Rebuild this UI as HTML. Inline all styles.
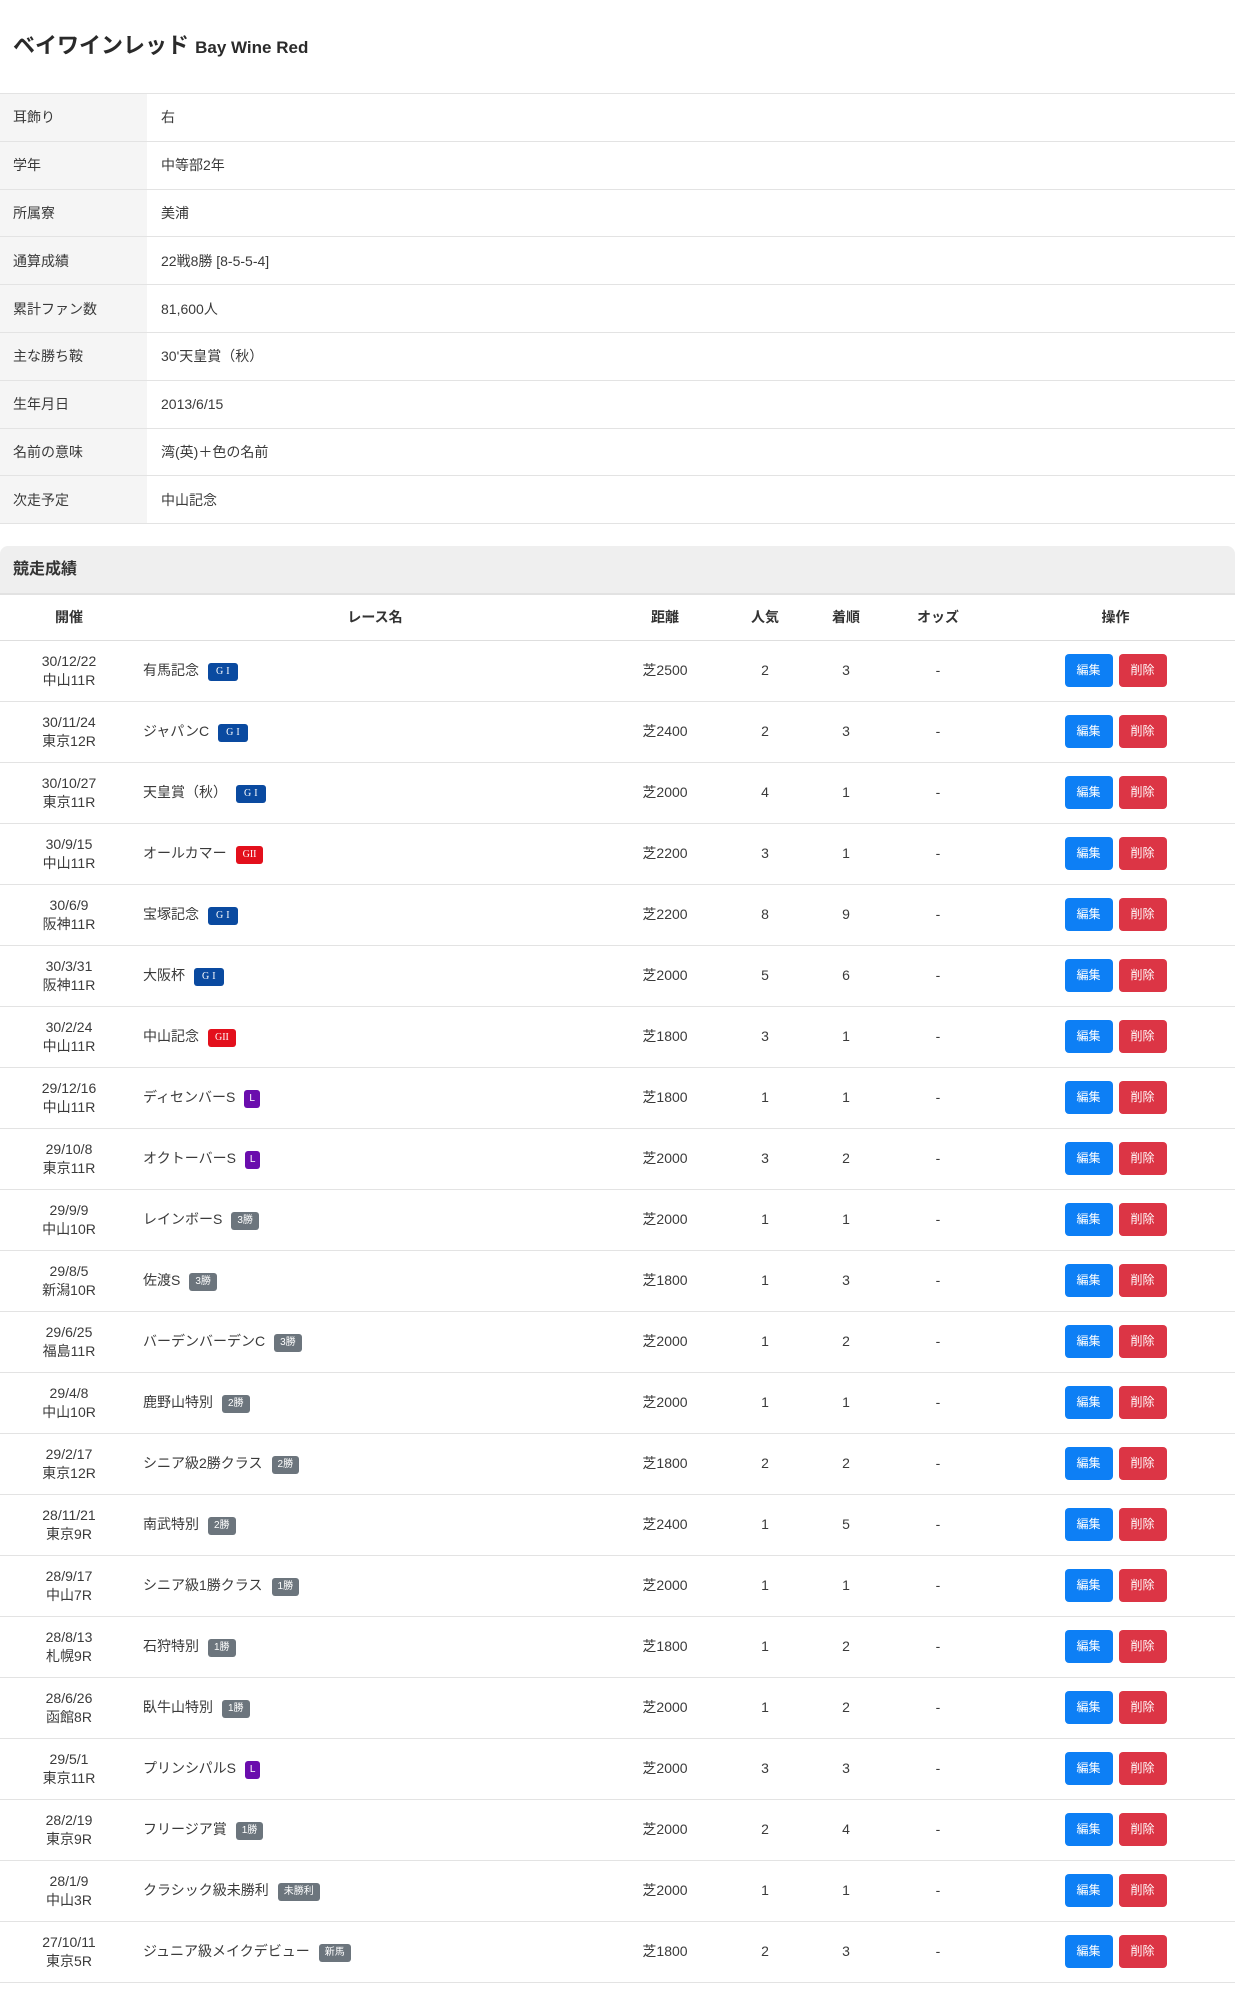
<!DOCTYPE html>
<html><head><meta charset="utf-8"><style>
*{box-sizing:border-box;margin:0;padding:0}
body{width:1235px;height:2000px;overflow:hidden;background:#fff;font-family:"Liberation Sans","Noto Sans CJK JP",sans-serif;color:#3a3a3a;font-size:14px}
h1{position:absolute;left:13px;top:31px;font-size:22px;font-weight:bold;color:#2a2a2a;line-height:30px}
h1 small{font-size:17px}
.info{position:absolute;top:93px;left:0;width:1235px;border-collapse:collapse}
.info td{height:47.8px;border-bottom:1px solid #e3e3e3;border-top:1px solid #e3e3e3;padding-left:13px;font-size:14px;color:#3a3a3a}
.info td.l{width:147px;background:#f5f5f5}
.info td.v{padding-left:14px}
.sec{position:absolute;top:546px;left:0;width:1235px;height:49px;background:#efefef;border-radius:8px 8px 0 0;border-bottom:2px solid #e2e2e2;padding-left:13px;line-height:47px;font-weight:bold;font-size:16px;color:#333}
.res{position:absolute;top:595px;left:0;width:1235px;border-collapse:collapse;table-layout:fixed}
.res th{height:45px;font-weight:bold;font-size:14px;border-bottom:1px solid #dedede;color:#333}
.res td{height:61px;border-bottom:1px solid #e3e3e3;text-align:center;font-size:14px;line-height:19px;color:#3a3a3a}
.res td.n{text-align:left;padding-left:5px}
.b{display:inline-block;font-size:10px;color:#fff;border-radius:3px;padding:0 6px;height:18px;line-height:18px;margin-left:9px;vertical-align:1px}
.g1{background:#0a4aa0;font-family:"Liberation Serif",serif;letter-spacing:3px;padding:0 5px 0 8px}
.g2{background:#e3101c;font-family:"Liberation Serif",serif;padding:0 7px}
.L{background:#6a0dad;padding:0 5px}
.gr{background:#6c757d}
.btn{display:inline-block;width:48px;height:33px;line-height:33px;color:#fff;border-radius:4px;font-size:12px;text-align:center}
.e{background:#0d7ff5}.d{background:#dc3545;margin-left:6px}
</style></head><body>
<h1>ベイワインレッド <small>Bay Wine Red</small></h1>
<table class="info">
<tr><td class="l">耳飾り</td><td class="v">右</td></tr>
<tr><td class="l">学年</td><td class="v">中等部2年</td></tr>
<tr><td class="l">所属寮</td><td class="v">美浦</td></tr>
<tr><td class="l">通算成績</td><td class="v">22戦8勝 [8-5-5-4]</td></tr>
<tr><td class="l">累計ファン数</td><td class="v">81,600人</td></tr>
<tr><td class="l">主な勝ち鞍</td><td class="v">30'天皇賞（秋）</td></tr>
<tr><td class="l">生年月日</td><td class="v">2013/6/15</td></tr>
<tr><td class="l">名前の意味</td><td class="v">湾(英)＋色の名前</td></tr>
<tr><td class="l">次走予定</td><td class="v">中山記念</td></tr>
</table>
<div class="sec">競走成績</div>
<table class="res">
<colgroup><col style="width:138px"><col style="width:474px"><col style="width:106px"><col style="width:94px"><col style="width:68px"><col style="width:116px"><col style="width:239px"></colgroup>
<tr><th>開催</th><th>レース名</th><th>距離</th><th>人気</th><th>着順</th><th>オッズ</th><th>操作</th></tr>
<tr><td>30/12/22<br>中山11R</td><td class="n">有馬記念<span class="b g1">GI</span></td><td>芝2500</td><td>2</td><td>3</td><td>-</td><td><span class="btn e">編集</span><span class="btn d">削除</span></td></tr>
<tr><td>30/11/24<br>東京12R</td><td class="n">ジャパンC<span class="b g1">GI</span></td><td>芝2400</td><td>2</td><td>3</td><td>-</td><td><span class="btn e">編集</span><span class="btn d">削除</span></td></tr>
<tr><td>30/10/27<br>東京11R</td><td class="n">天皇賞（秋）<span class="b g1">GI</span></td><td>芝2000</td><td>4</td><td>1</td><td>-</td><td><span class="btn e">編集</span><span class="btn d">削除</span></td></tr>
<tr><td>30/9/15<br>中山11R</td><td class="n">オールカマー<span class="b g2">GII</span></td><td>芝2200</td><td>3</td><td>1</td><td>-</td><td><span class="btn e">編集</span><span class="btn d">削除</span></td></tr>
<tr><td>30/6/9<br>阪神11R</td><td class="n">宝塚記念<span class="b g1">GI</span></td><td>芝2200</td><td>8</td><td>9</td><td>-</td><td><span class="btn e">編集</span><span class="btn d">削除</span></td></tr>
<tr><td>30/3/31<br>阪神11R</td><td class="n">大阪杯<span class="b g1">GI</span></td><td>芝2000</td><td>5</td><td>6</td><td>-</td><td><span class="btn e">編集</span><span class="btn d">削除</span></td></tr>
<tr><td>30/2/24<br>中山11R</td><td class="n">中山記念<span class="b g2">GII</span></td><td>芝1800</td><td>3</td><td>1</td><td>-</td><td><span class="btn e">編集</span><span class="btn d">削除</span></td></tr>
<tr><td>29/12/16<br>中山11R</td><td class="n">ディセンバーS<span class="b L">L</span></td><td>芝1800</td><td>1</td><td>1</td><td>-</td><td><span class="btn e">編集</span><span class="btn d">削除</span></td></tr>
<tr><td>29/10/8<br>東京11R</td><td class="n">オクトーバーS<span class="b L">L</span></td><td>芝2000</td><td>3</td><td>2</td><td>-</td><td><span class="btn e">編集</span><span class="btn d">削除</span></td></tr>
<tr><td>29/9/9<br>中山10R</td><td class="n">レインボーS<span class="b gr">3勝</span></td><td>芝2000</td><td>1</td><td>1</td><td>-</td><td><span class="btn e">編集</span><span class="btn d">削除</span></td></tr>
<tr><td>29/8/5<br>新潟10R</td><td class="n">佐渡S<span class="b gr">3勝</span></td><td>芝1800</td><td>1</td><td>3</td><td>-</td><td><span class="btn e">編集</span><span class="btn d">削除</span></td></tr>
<tr><td>29/6/25<br>福島11R</td><td class="n">バーデンバーデンC<span class="b gr">3勝</span></td><td>芝2000</td><td>1</td><td>2</td><td>-</td><td><span class="btn e">編集</span><span class="btn d">削除</span></td></tr>
<tr><td>29/4/8<br>中山10R</td><td class="n">鹿野山特別<span class="b gr">2勝</span></td><td>芝2000</td><td>1</td><td>1</td><td>-</td><td><span class="btn e">編集</span><span class="btn d">削除</span></td></tr>
<tr><td>29/2/17<br>東京12R</td><td class="n">シニア級2勝クラス<span class="b gr">2勝</span></td><td>芝1800</td><td>2</td><td>2</td><td>-</td><td><span class="btn e">編集</span><span class="btn d">削除</span></td></tr>
<tr><td>28/11/21<br>東京9R</td><td class="n">南武特別<span class="b gr">2勝</span></td><td>芝2400</td><td>1</td><td>5</td><td>-</td><td><span class="btn e">編集</span><span class="btn d">削除</span></td></tr>
<tr><td>28/9/17<br>中山7R</td><td class="n">シニア級1勝クラス<span class="b gr">1勝</span></td><td>芝2000</td><td>1</td><td>1</td><td>-</td><td><span class="btn e">編集</span><span class="btn d">削除</span></td></tr>
<tr><td>28/8/13<br>札幌9R</td><td class="n">石狩特別<span class="b gr">1勝</span></td><td>芝1800</td><td>1</td><td>2</td><td>-</td><td><span class="btn e">編集</span><span class="btn d">削除</span></td></tr>
<tr><td>28/6/26<br>函館8R</td><td class="n">臥牛山特別<span class="b gr">1勝</span></td><td>芝2000</td><td>1</td><td>2</td><td>-</td><td><span class="btn e">編集</span><span class="btn d">削除</span></td></tr>
<tr><td>29/5/1<br>東京11R</td><td class="n">プリンシパルS<span class="b L">L</span></td><td>芝2000</td><td>3</td><td>3</td><td>-</td><td><span class="btn e">編集</span><span class="btn d">削除</span></td></tr>
<tr><td>28/2/19<br>東京9R</td><td class="n">フリージア賞<span class="b gr">1勝</span></td><td>芝2000</td><td>2</td><td>4</td><td>-</td><td><span class="btn e">編集</span><span class="btn d">削除</span></td></tr>
<tr><td>28/1/9<br>中山3R</td><td class="n">クラシック級未勝利<span class="b gr">未勝利</span></td><td>芝2000</td><td>1</td><td>1</td><td>-</td><td><span class="btn e">編集</span><span class="btn d">削除</span></td></tr>
<tr><td>27/10/11<br>東京5R</td><td class="n">ジュニア級メイクデビュー<span class="b gr">新馬</span></td><td>芝1800</td><td>2</td><td>3</td><td>-</td><td><span class="btn e">編集</span><span class="btn d">削除</span></td></tr>
</table>
</body></html>
